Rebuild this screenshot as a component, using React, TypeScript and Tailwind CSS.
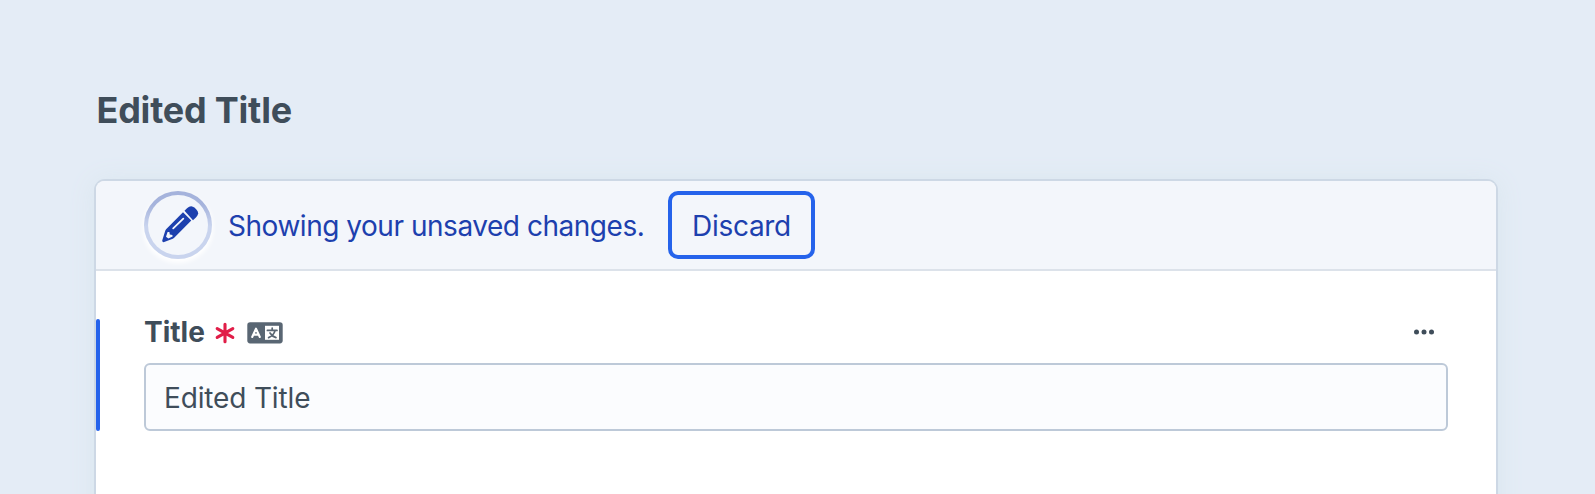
import React from "react";

function PencilIcon() {
  return (
    <svg width="37" height="37" viewBox="0 0 37 37" className="relative -top-px left-[2.5px] shrink-0 text-[#1d40ae]" fill="none">
      <path
        d="M21 6.3 L29.3 14.6 L12.2 31.7 Q11.6 32.3 10.8 32.7 L2.2 36.1 Q-.1 36.6 .3 34.2 L3.1 25.2 Q3.3 24.1 4.1 23.2 Z"
        fill="currentColor"
      />
      <path
        d="M22.5 4.8 L25.3 2 Q29 -1.6 32.7 1.8 L34.6 3.7 Q37.8 7.4 34.4 10.9 L31 14.2 Z"
        fill="currentColor"
      />
      <path d="M11.2 22.4 L21.3 12.6" stroke="#f3f6fb" strokeWidth="1.8" strokeLinecap="round" />
      <path d="M5.6 25.9 L7.4 26 L7.8 28.4 L10.4 29 L10.6 30.6 L6.4 32.6 L4 30.8 Z" fill="#f3f6fb" />
    </svg>
  );
}

function RequiredIcon() {
  return (
    <svg width="20" height="22" viewBox="0 0 20 22" className="text-[#e11d48]">
      <path
        d="M10 2.2 V19.8 M2.2 6.6 L17.8 15.4 M17.8 6.6 L2.2 15.4"
        stroke="currentColor"
        strokeWidth="3.1"
        strokeLinecap="round"
      />
    </svg>
  );
}

function TranslatableIcon() {
  return (
    <svg width="36" height="22" viewBox="0 0 36 22" fill="none">
      <rect x=".3" y=".2" width="35.4" height="21.2" rx="2.8" fill="#596673" />
      <path d="M5.2 15 L9 6.6 L12.8 15 M6.6 12.6 H11.4" stroke="#fff" strokeWidth="2.1" strokeLinecap="round" strokeLinejoin="round" />
      <rect x="18" y="3.8" width="14" height="14" fill="#fff" />
      <path
        d="M20.4 8.4 H30 M25.2 6 V8.4 M28 8.8 Q26.6 13.6 21.6 15.6 M23 11 Q25 14.4 29 15.6"
        stroke="#596673"
        strokeWidth="1.7"
        strokeLinecap="round"
      />
    </svg>
  );
}

function NoticeBar() {
  return (
    <div className="flex h-[90px] items-start rounded-t-[8px] border-b-2 border-[#dce2ea] bg-[#f3f6fb] pt-[10px] pl-12 text-[28px] text-[#1d40ae]">
      <div className="flex size-[68px] shrink-0 items-center justify-center rounded-full border-4 border-transparent shadow-[0_3px_5px_1px_#ffffff] [background:linear-gradient(#f3f6fb,#f3f6fb)_padding-box,linear-gradient(#a5b3dc_20%,#c9d4ee_52%)_border-box]">
        <PencilIcon />
      </div>
      <p className="ml-4 h-[68px] w-[416px] pt-px leading-[68px] tracking-[-0.47px] whitespace-nowrap">
        Showing your unsaved changes.
      </p>
      <button className="ml-6 h-[68px] w-[147px] rounded-[10px] border-4 border-[#2563eb] pt-px text-center leading-[60px] tracking-[-0.3px]">
        Discard
      </button>
    </div>
  );
}

function TitleField() {
  return (
    <div className="mt-12 flex h-[112px]">
      <div className="w-1 shrink-0 rounded-[2px] bg-[#2563eb]" />
      <div className="ml-11 w-[1304px]">
        <div className="flex h-[44px] items-start">
          <label htmlFor="title" className="w-[62px] text-[28px] leading-[26px] font-bold whitespace-nowrap">
            Title
          </label>
          <span className="mt-[2.5px] ml-[8.5px]">
            <RequiredIcon />
          </span>
          <span className="mt-[3px] ml-[12.5px]">
            <TranslatableIcon />
          </span>
          <button className="mt-[9.5px] mr-[14px] ml-auto" aria-label="Actions">
            <svg width="20" height="6" viewBox="0 0 20 6" fill="currentColor">
              <circle cx="2.5" cy="3" r="2.5" />
              <circle cx="10" cy="3" r="2.5" />
              <circle cx="17.5" cy="3" r="2.5" />
            </svg>
          </button>
        </div>
        <input
          id="title"
          defaultValue="Edited Title"
          className="block h-[68px] w-full rounded-[6px] border-2 border-[#bdc9d8] bg-[#fbfcfe] pt-[2px] pl-[18px] text-[28px] tracking-[-0.15px] outline-none"
        />
      </div>
    </div>
  );
}

export default function App() {
  return (
    <div className="h-[494px] overflow-hidden bg-[#e4ecf6] pt-[86px] pl-[94px] font-['Inter',sans-serif] text-[#3f4d5a]">
      <h1 className="pl-[2.5px] text-[36px] leading-[48px] font-bold tracking-[-0.22px]">Edited Title</h1>
      <main className="mt-[45px] h-[400px] w-[1404px] rounded-[11px] border-2 border-[#cdd8e5] bg-white shadow-[0_2px_26px_#d9e6ee]">
        <NoticeBar />
        <TitleField />
      </main>
    </div>
  );
}
